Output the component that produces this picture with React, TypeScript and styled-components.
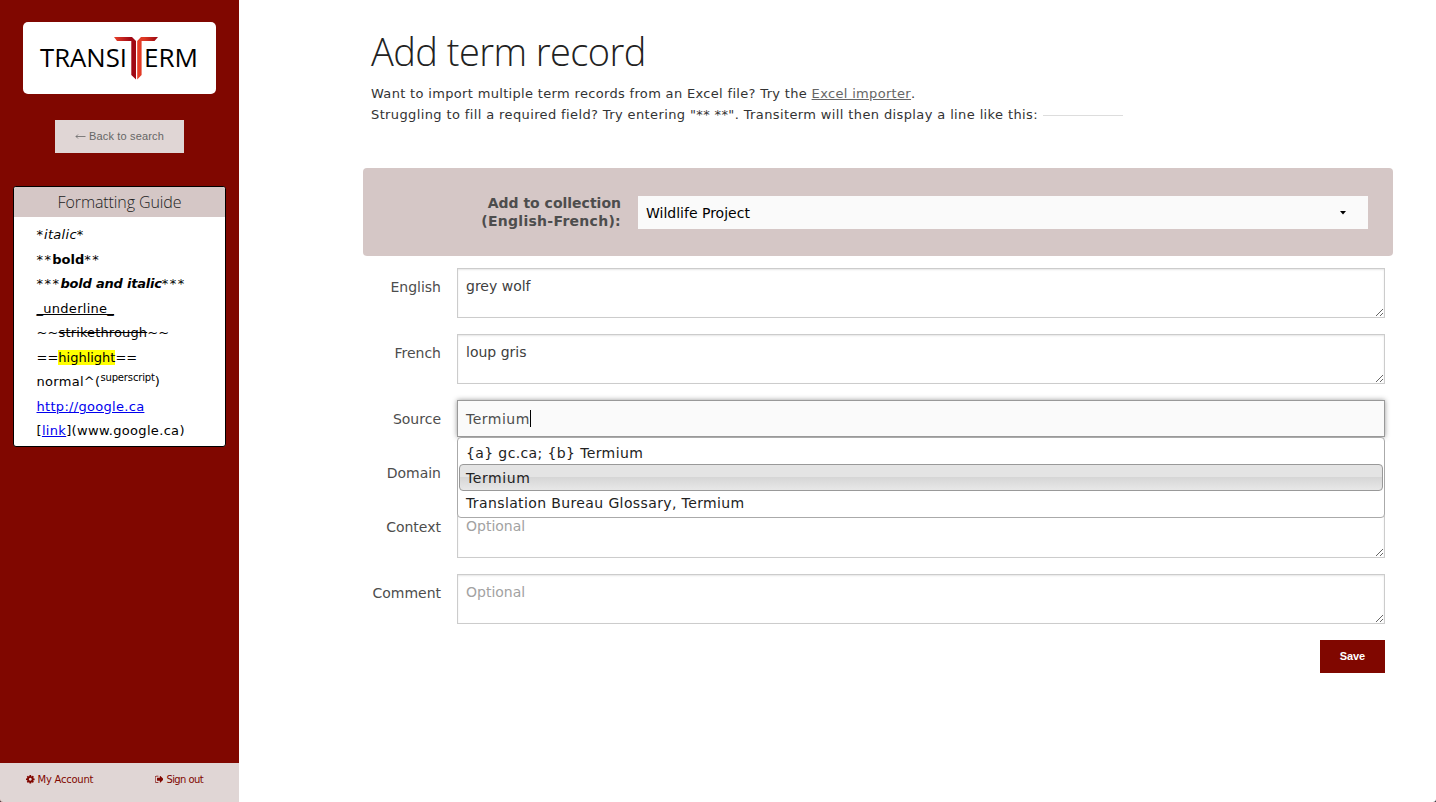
import React from "react";
import styled, { createGlobalStyle } from "styled-components";

const verdana = `Verdana, "DejaVu Sans", sans-serif`;
const openSans = `"Open Sans", sans-serif`;
const helvetica = `"Liberation Sans", Arial, sans-serif`;

const GlobalStyle = createGlobalStyle`
  * { box-sizing: border-box; }
  body { margin: 0; background: #2c2c34; font-family: ${verdana}; overflow: hidden; }
`;

const Page = styled.div`
  display: flex;
  width: 1436px;
  height: 802px;
  border-radius: 0 0 3px 3px;
  background: #fff;
  overflow: hidden;
`;

const Tracked = styled.span<{ $by: number }>`
  letter-spacing: ${(p) => p.$by}px;
`;

const Sidebar = styled.aside`
  width: 239px;
  flex: none;
  display: flex;
  flex-direction: column;
  align-items: center;
  padding-top: 22px;
  background: #800700;
`;

const LogoCard = styled.div`
  width: 193px;
  height: 72px;
  border-radius: 5px;
  background: #fff;
`;

const BackButton = styled.button`
  display: flex;
  align-items: center;
  justify-content: center;
  gap: 3px;
  width: 129px;
  height: 33px;
  margin-top: 26px;
  padding: 0 0 1px;
  border: 0;
  background: #e0d6d5;
  color: #666;
  font: 11px ${helvetica};
  letter-spacing: 0.17px;
`;

const Guide = styled.section`
  width: 213px;
  height: 261px;
  margin-top: 33px;
  border: 1px solid #000;
  border-radius: 3px;
  background: #fff;
  overflow: hidden;
`;

const GuideTitle = styled.h2`
  height: 30px;
  margin: 0;
  background: #d5c7c6;
  color: #222;
  font: 300 16px/31px ${openSans};
  letter-spacing: -0.1px;
  text-align: center;
`;

const GuideList = styled.div`
  padding: 6px 0 0 22.5px;
`;

const GuideLine = styled.div<{ $spacing?: number }>`
  height: 24.5px;
  font-size: 13px;
  line-height: 24.5px;
  letter-spacing: ${(p) => p.$spacing ?? 0}px;
  white-space: nowrap;
  color: #000;

  mark { background: #ff0; }
  a { color: #00e; text-decoration: underline; }
  sup { font-size: 10px; line-height: 0; letter-spacing: -0.15px; vertical-align: 5px; }
`;

const AccountBar = styled.nav`
  display: flex;
  justify-content: space-between;
  width: 100%;
  height: 39px;
  margin-top: auto;
  padding: 0 36px 6px 26px;
  background: #e0d6d5;
`;

const AccountLink = styled.a<{ $spacing: number }>`
  display: flex;
  align-items: center;
  gap: 3px;
  color: #800700;
  font-size: 10px;
  letter-spacing: ${(p) => p.$spacing}px;
  white-space: nowrap;
`;

const Main = styled.main`
  width: 1030px;
  margin-left: 124px;
`;

const Heading = styled.h1`
  height: 55px;
  margin: 24px 0 4px 8px;
  color: #222;
  font: 300 38px/54px ${openSans};
  letter-spacing: -0.55px;
  white-space: nowrap;
`;

const Intro = styled.p<{ $spacing: number }>`
  display: flex;
  align-items: center;
  height: 21px;
  margin: 0 0 0 8px;
  color: #333;
  font-size: 13px;
  letter-spacing: ${(p) => p.$spacing}px;
  white-space: pre;

  a { color: #666; text-decoration: underline; }
`;

const SampleLine = styled.span`
  width: 80px;
  height: 1px;
  margin: 2px 0 0 5px;
  background: #ddd;
`;

const CollectionPanel = styled.div`
  display: flex;
  align-items: center;
  height: 88px;
  margin-top: 43px;
  padding: 0 25px 0 0;
  border-radius: 4px;
  background: #d5c7c6;
`;

const CollectionLabel = styled.label`
  width: 258px;
  margin-right: 17px;
  color: #4d4d4d;
  font-size: 14px;
  font-weight: bold;
  line-height: 18px;
  text-align: right;
`;

const Select = styled.div`
  flex: 1;
  display: flex;
  align-items: center;
  justify-content: space-between;
  height: 33px;
  margin-top: 1px;
  padding: 0 22px 0 8px;
  background: #fafafa;
  color: #000;
  font-size: 14px;
`;

const Form = styled.form`
  display: flex;
  flex-direction: column;
  gap: 16px;
  margin: 12px 8px 0 0;
`;

const Field = styled.div`
  display: flex;
`;

const FieldLabel = styled.label`
  width: 78px;
  margin: 10px 16px 0 0;
  color: #4d4d4d;
  font-size: 14px;
  line-height: 18px;
  text-align: right;
`;

const TextArea = styled.textarea`
  flex: 1;
  display: block;
  height: 50px;
  margin: 0;
  padding: 8px;
  border: 1px solid #ccc;
  outline: 0;
  background: #fff;
  box-shadow: inset 0 1px 2px rgba(0, 0, 0, 0.1);
  color: #404040;
  font: 14px/18px ${verdana};
  resize: both;

  &::placeholder { color: #a2a2a2; opacity: 1; }
`;

const InputWrap = styled.div`
  position: relative;
  flex: 1;
  height: 38px;
`;

const Input = styled.div<{ $focused?: boolean }>`
  display: flex;
  align-items: center;
  height: 37px;
  padding: 0 8px;
  border: 1px solid ${(p) => (p.$focused ? "#999" : "#ccc")};
  background: ${(p) => (p.$focused ? "#fafafa" : "#fff")};
  box-shadow: ${(p) => (p.$focused ? "0 0 5px #999" : "inset 0 1px 2px rgba(0,0,0,.1)")};
  color: #4d4d4d;
  font-size: 14px;
  letter-spacing: 0.5px;
`;

const Caret = styled.span`
  width: 1px;
  height: 17px;
  background: #000;
`;

const Menu = styled.ul`
  position: absolute;
  z-index: 2;
  top: 37px;
  left: 0;
  right: 0;
  height: 81px;
  margin: 0;
  padding: 2px 1px;
  border: 1px solid #aaa;
  border-radius: 4px;
  background: #fff;
  list-style: none;
`;

const MenuItem = styled.li<{ $active?: boolean; $spacing?: number }>`
  height: ${(p) => (p.$active ? 27 : 25)}px;
  margin: ${(p) => (p.$active ? "-1px 0" : "0")};
  padding: 0 ${(p) => (p.$active ? 6 : 7)}px;
  border: ${(p) => (p.$active ? "1px solid #999" : "0")};
  border-radius: 4px;
  background: ${(p) => (p.$active ? "linear-gradient(#e4e4e4 0 48%, #d6d6d6 50%, #e8e8e8)" : "none")};
  color: #222;
  font-size: 14px;
  line-height: 26px;
  letter-spacing: ${(p) => p.$spacing ?? 0.38}px;
`;

const SaveButton = styled.button`
  align-self: flex-end;
  width: 65px;
  height: 33px;
  padding: 0 0 1px;
  border: 0;
  background: #800700;
  color: #fff;
  font: bold 11px ${helvetica};
  letter-spacing: -0.1px;
`;

function Logo() {
  return (
    <svg width="193" height="72" viewBox="0 0 193 72">
      <defs>
        <linearGradient id="left">
          <stop offset="0" stopColor="#e8402a" />
          <stop offset="0.75" stopColor="#a00814" />
        </linearGradient>
        <linearGradient id="right">
          <stop offset="0" stopColor="#e8402a" />
          <stop offset="0.35" stopColor="#dc3622" />
          <stop offset="1" stopColor="#980610" />
        </linearGradient>
      </defs>
      <g fill="#000" fontFamily="Open Sans" fontSize="26">
        <text x="17" y="45" textLength="87" lengthAdjust="spacingAndGlyphs">TRANSI</text>
        <text x="121" y="45" textLength="54" lengthAdjust="spacingAndGlyphs">ERM</text>
      </g>
      <path d="M91 15H109L113 19V57.5L108.3 53V19H94Z" fill="url(#left)" />
      <path d="M135 15H118L114.2 19V57.5L118.6 53V19H131.5Z" fill="url(#right)" />
    </svg>
  );
}

function GearIcon() {
  return (
    <svg width="8.6" height="8.6" viewBox="128 128 1536 1536" fill="currentColor">
      <path d="M1152 896q0-106-75-181t-181-75-181 75-75 181 75 181 181 75 181-75 75-181zm512-109v222q0 12-8 23t-20 13l-185 28q-19 54-39 91 35 50 107 138 10 12 10 25t-9 23q-27 37-99 108t-94 71q-12 0-26-9l-138-108q-44 23-91 38-16 136-29 186-7 28-36 28h-222q-14 0-24.5-8.5t-11.5-21.5l-28-184q-49-16-90-37l-141 107q-10 9-25 9-14 0-25-11-126-114-165-168-7-10-7-23 0-12 8-23 15-21 51-66.5t54-70.5q-27-50-41-99l-183-27q-13-2-21-12.5t-8-23.5v-222q0-12 8-23t19-13l186-28q14-46 39-92-40-57-107-138-10-12-10-24 0-10 9-23 26-36 98.5-107.5t94.5-71.5q13 0 26 10l138 107q44-23 91-38 16-136 29-186 7-28 36-28h222q14 0 24.5 8.5t11.5 21.5l28 184q49 16 90 37l142-107q9-9 24-9 13 0 25 10 129 119 165 170 7 8 7 22 0 12-8 23-15 21-51 66.5t-54 70.5q26 50 41 98l183 28q13 2 21 12.5t8 23.5z" />
    </svg>
  );
}

function SignOutIcon() {
  return (
    <svg width="8.6" height="8.6" viewBox="96 128 1536 1536" fill="currentColor">
      <path d="M704 1440q0 4 1 20t.5 26.5-3 23.5-10 19.5-20.5 6.5h-320q-119 0-203.5-84.5t-84.5-203.5v-704q0-119 84.5-203.5t203.5-84.5h320q13 0 22.5 9.5t9.5 22.5q0 4 1 20t.5 26.5-3 23.5-10 19.5-20.5 6.5h-320q-66 0-113 47t-47 113v704q0 66 47 113t113 47h312l11.5 1 11.5 3 8 5.5 7 9 2 13.5zm928-544q0 26-19 45l-544 544q-19 19-45 19t-45-19-19-45v-288h-448q-26 0-45-19t-19-45v-384q0-26 19-45t45-19h448v-288q0-26 19-45t45-19 45 19l544 544q19 19 19 45z" />
    </svg>
  );
}

function BackArrow() {
  return (
    <svg width="11" height="7" viewBox="0 0 11 7" fill="none" stroke="currentColor" strokeWidth="0.8">
      <path d="M10.5 3.5H1M3 1.5L1 3.5L3 5.5" />
    </svg>
  );
}

function SelectArrow() {
  return (
    <svg width="6" height="4" viewBox="0 0 6 4">
      <path d="M0 0H6L3 3.5Z" fill="#000" />
    </svg>
  );
}

export default function App() {
  return (
    <Page>
      <GlobalStyle />
      <Sidebar>
        <LogoCard><Logo /></LogoCard>
        <BackButton><BackArrow />Back to search</BackButton>
        <Guide>
          <GuideTitle>Formatting Guide</GuideTitle>
          <GuideList>
            <GuideLine><Tracked $by={1}>*</Tracked><Tracked $by={0.3}><i>italic</i></Tracked>*</GuideLine>
            <GuideLine><Tracked $by={1.4}>**</Tracked><b>bold</b><Tracked $by={1.4}>**</Tracked></GuideLine>
            <GuideLine><Tracked $by={1.5}>***</Tracked><Tracked $by={-0.22}><b><i>bold and italic</i></b></Tracked><Tracked $by={1.5}>***</Tracked></GuideLine>
            <GuideLine $spacing={0.28}><u>_underline_</u></GuideLine>
            <GuideLine $spacing={0.13}>~~<s>strikethrough</s>~~</GuideLine>
            <GuideLine>==<mark>highlight</mark>==</GuideLine>
            <GuideLine $spacing={0.3}>normal^(<sup>superscript</sup>)</GuideLine>
            <GuideLine $spacing={0.3}><a>http://google.ca</a></GuideLine>
            <GuideLine $spacing={0.33}>[<a>link</a>](www.google.ca)</GuideLine>
          </GuideList>
        </Guide>
        <AccountBar>
          <AccountLink $spacing={-0.25}><GearIcon />My Account</AccountLink>
          <AccountLink $spacing={-0.6}><SignOutIcon />Sign out</AccountLink>
        </AccountBar>
      </Sidebar>
      <Main>
        <Heading>Add term record</Heading>
        <Intro $spacing={0.33}>Want to import multiple term records from an Excel file? Try the <a>Excel importer</a>.</Intro>
        <Intro $spacing={0.38}>Struggling to fill a required field? Try entering "** **". Transiterm will then display a line like this:<SampleLine /></Intro>
        <CollectionPanel>
          <CollectionLabel>Add to collection<br /><Tracked $by={0.28}>(English-French):</Tracked></CollectionLabel>
          <Select>Wildlife Project<SelectArrow /></Select>
        </CollectionPanel>
        <Form>
          <Field>
            <FieldLabel>English</FieldLabel>
            <TextArea defaultValue="grey wolf" spellCheck={false} />
          </Field>
          <Field>
            <FieldLabel>French</FieldLabel>
            <TextArea defaultValue="loup gris" spellCheck={false} />
          </Field>
          <Field>
            <FieldLabel>Source</FieldLabel>
            <InputWrap>
              <Input $focused>Termium<Caret /></Input>
              <Menu>
                <MenuItem>{"{a} gc.ca; {b} Termium"}</MenuItem>
                <MenuItem $active $spacing={0.6}>Termium</MenuItem>
                <MenuItem>Translation Bureau Glossary, Termium</MenuItem>
              </Menu>
            </InputWrap>
          </Field>
          <Field>
            <FieldLabel>Domain</FieldLabel>
            <InputWrap><Input /></InputWrap>
          </Field>
          <Field>
            <FieldLabel>Context</FieldLabel>
            <TextArea placeholder="Optional" />
          </Field>
          <Field>
            <FieldLabel>Comment</FieldLabel>
            <TextArea placeholder="Optional" />
          </Field>
          <SaveButton type="button">Save</SaveButton>
        </Form>
      </Main>
    </Page>
  );
}
